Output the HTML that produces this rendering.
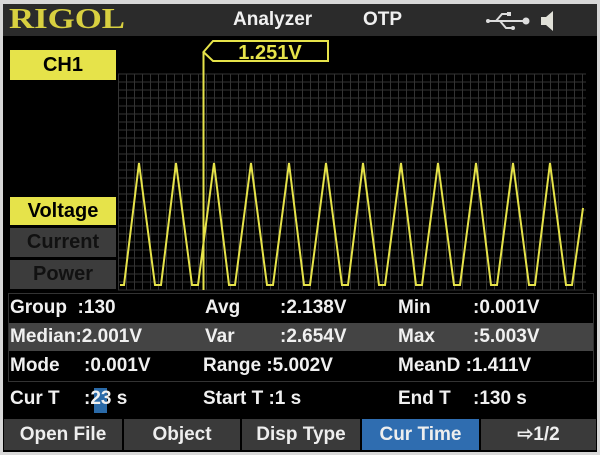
<!DOCTYPE html>
<html><head><meta charset="utf-8"><style>
body{margin:0;width:600px;height:455px;background:#d8d8d8;overflow:hidden;font-family:"Liberation Sans",sans-serif;font-weight:bold}
#scr{position:absolute;left:3px;top:4px;width:594px;height:448px;background:#000}
.a{position:absolute}
.t{position:absolute;color:#f0f0f0;font-size:19px;white-space:pre;line-height:22px}
.btn{position:absolute;top:419px;height:31px;background:#3a3a3a;color:#eee;font-size:19px;line-height:31px;text-align:center}
</style></head><body>
<div id="scr"></div>
<div class="a" style="left:3px;top:4px;width:594px;height:32px;background:#2b2b2b"></div>
<div class="a" style="left:9px;top:3px;font-family:'Liberation Serif',serif;font-size:29px;color:#d8d040;line-height:32px;transform:scaleX(1.2);transform-origin:left">RIGOL</div>
<div class="t" style="left:233px;top:9px;font-size:19px">Analyzer</div>
<div class="t" style="left:363px;top:9px;font-size:19px">OTP</div>
<svg class="a" style="left:486px;top:10px" width="80" height="22" viewBox="0 0 80 22">
<g stroke="#ddd" stroke-width="2" fill="none"><path d="M3 11H38M10 11L16 4H22M14 11L20 18H26"/></g>
<circle cx="2" cy="11" r="2" fill="#ddd"/><circle cx="40" cy="11" r="3.5" fill="#ddd"/>
<rect x="21" y="2" width="4" height="4" fill="#ddd"/><circle cx="27" cy="18" r="2" fill="#ddd"/>
<path d="M55 7H60L67 1V21L60 15H55Z" fill="#e0e0d8"/></svg>
<div class="a" style="left:10px;top:50px;width:106px;height:30px;background:#e6e34a;color:#000;font-size:20px;line-height:30px;text-align:center">CH1</div>
<svg class="a" style="left:0;top:0" width="600" height="300">
<g stroke="#333" stroke-width="1">
<path d="M118 74H586M118 82H586M118 90H586M118 98H586M118 106H586M118 114H586M118 122H586M118 130H586M118 138H586M118 146H586M118 154H586M118 162H586M118 170H586M118 178H586M118 186H586M118 194H586M118 202H586M118 210H586M118 218H586M118 226H586M118 234H586M118 242H586M118 250H586M118 258H586M118 266H586M118 274H586M118 282H586M118 290H586"/>
<path d="M118.5 74V290M126.5 74V290M134.5 74V290M142.5 74V290M150.5 74V290M158.5 74V290M166.5 74V290M174.5 74V290M182.5 74V290M190.5 74V290M198.5 74V290M206.5 74V290M214.5 74V290M222.5 74V290M230.5 74V290M238.5 74V290M246.5 74V290M254.5 74V290M262.5 74V290M270.5 74V290M278.5 74V290M286.5 74V290M294.5 74V290M302.5 74V290M310.5 74V290M318.5 74V290M326.5 74V290M334.5 74V290M342.5 74V290M350.5 74V290M358.5 74V290M366.5 74V290M374.5 74V290M382.5 74V290M390.5 74V290M398.5 74V290M406.5 74V290M414.5 74V290M422.5 74V290M430.5 74V290M438.5 74V290M446.5 74V290M454.5 74V290M462.5 74V290M470.5 74V290M478.5 74V290M486.5 74V290M494.5 74V290M502.5 74V290M510.5 74V290M518.5 74V290M526.5 74V290M534.5 74V290M542.5 74V290M550.5 74V290M558.5 74V290M566.5 74V290M574.5 74V290M582.5 74V290"/></g>
<polyline fill="none" stroke="#e6e34a" stroke-width="2" points="120,285 124,285 139,163 155,285 161,285 176,163 192,285 198,285 214,163 229,285 235,285 251,163 267,285 273,285 289,163 304,285 310,285 326,163 342,285 348,285 363,163 379,285 385,285 401,163 416,285 422,285 438,163 454,285 460,285 476,163 491,285 497,285 513,163 529,285 535,285 550,163 566,285 572,285 583,208"/>
<path d="M203.5 52V290" stroke="#e6e34a" stroke-width="2"/>
<path d="M203.5 52L213 41H328V61H213Z" fill="#000" stroke="#e6e34a" stroke-width="2"/>
<text x="270" y="59" fill="#e6e34a" font-size="20" font-weight="bold" text-anchor="middle" font-family="Liberation Sans">1.251V</text>
</svg>
<div class="a" style="left:10px;top:197px;width:106px;height:28px;background:#e6e34a;color:#000;font-size:20px;line-height:28px;text-align:center">Voltage</div>
<div class="a" style="left:10px;top:228px;width:106px;height:29px;background:#3c3c3c;color:#111;font-size:20px;line-height:29px;text-align:center">Current</div>
<div class="a" style="left:10px;top:260px;width:106px;height:29px;background:#3c3c3c;color:#111;font-size:20px;line-height:29px;text-align:center">Power</div>
<div class="a" style="left:8px;top:293px;width:584px;height:87px;border:1px solid #333"></div>
<div class="a" style="left:9px;top:323px;width:584px;height:28px;background:#444"></div>
<div class="t" style="left:10px;top:297px">Group  :130</div>
<div class="t" style="left:205px;top:297px">Avg</div><div class="t" style="left:280px;top:297px">:2.138V</div>
<div class="t" style="left:398px;top:297px">Min</div><div class="t" style="left:473px;top:297px">:0.001V</div>
<div class="t" style="left:10px;top:326px">Median:2.001V</div>
<div class="t" style="left:205px;top:326px">Var</div><div class="t" style="left:280px;top:326px">:2.654V</div>
<div class="t" style="left:398px;top:326px">Max</div><div class="t" style="left:473px;top:326px">:5.003V</div>
<div class="t" style="left:10px;top:355px">Mode</div><div class="t" style="left:84px;top:355px">:0.001V</div>
<div class="t" style="left:203px;top:355px">Range :5.002V</div>
<div class="t" style="left:398px;top:355px">MeanD :1.411V</div>
<div class="a" style="left:94px;top:388px;width:13px;height:25px;background:#2a6aa8"></div>
<div class="t" style="left:10px;top:388px">Cur T</div><div class="t" style="left:84px;top:388px">:23 s</div>
<div class="t" style="left:203px;top:388px">Start T :1 s</div>
<div class="t" style="left:398px;top:388px">End T</div><div class="t" style="left:473px;top:388px">:130 s</div>
<div class="btn" style="left:4px;width:118px">Open File</div>
<div class="btn" style="left:124px;width:116px">Object</div>
<div class="btn" style="left:242px;width:118px">Disp Type</div>
<div class="btn" style="left:362px;width:117px;background:#2f6db0">Cur Time</div>
<div class="btn" style="left:481px;width:115px">⇨1/2</div>
</body></html>
